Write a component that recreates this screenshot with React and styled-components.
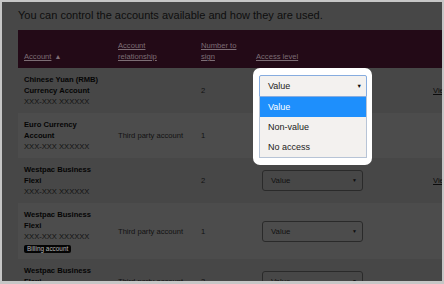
import React from 'react';
import styled, { createGlobalStyle } from 'styled-components';

const GlobalStyle = createGlobalStyle`
  html, body {
    margin: 0;
    padding: 0;
    background: #c6c6c6;
  }
  body {
    font-family: "Liberation Sans", Arial, sans-serif;
  }
`;

const Frame = styled.div`
  position: relative;
  width: 444px;
  height: 284px;
  box-sizing: border-box;
  border: 2px solid #c6c6c6;
  border-bottom-width: 3px;
  background: #474747;
  overflow: hidden;
`;

const Page = styled.div`
  width: 480px;
  padding: 6px 0 0 16px;
`;

const Title = styled.h1`
  margin: 0 0 8px;
  font-size: 11px;
  line-height: 14px;
  font-weight: normal;
  color: #0e0e0e;
`;

const Table = styled.table`
  border-collapse: collapse;
  table-layout: fixed;
  width: 469px;
  font-size: 7.6px;
  line-height: 11px;
`;

const Col = styled.col`
  width: ${({ $w }) => $w}px;
`;

const HeadRow = styled.tr`
  height: 38px;
  background: #230a17;
`;

const Th = styled.th`
  padding: 0 6px 6px;
  text-align: left;
  vertical-align: bottom;
  font-weight: normal;
  color: #7d6d75;
`;

const SortLink = styled.span`
  text-decoration: underline;
`;

const SortArrow = styled.span`
  margin-left: 3px;
  font-size: 7px;
  vertical-align: 0;
`;

const Row = styled.tr`
  background: ${({ $even }) => ($even ? '#4c4c4c' : '#474747')};
`;

const Td = styled.td`
  padding: 6px;
  vertical-align: middle;
  color: #121212;
`;

const Name = styled.div`
  font-weight: bold;
  color: #050505;
`;

const AccountNo = styled.div`
  color: #121212;
`;

const Badge = styled.div`
  width: fit-content;
  height: 8px;
  margin-top: 3px;
  padding: 0 3px;
  border-radius: 2px;
  background: #050505;
  color: #b4b4b4;
  font-size: 6.4px;
  line-height: 8px;
`;

const Select = styled.div`
  display: flex;
  align-items: center;
  justify-content: space-between;
  width: 101px;
  height: 21px;
  box-sizing: border-box;
  margin-left: 6px;
  padding: 0 5px 0 8px;
  border: 1px solid #2a2a2a;
  border-radius: 3px;
  color: #111;
  font-size: 7.8px;
`;

const Caret = styled.span`
  font-size: ${({ $size }) => $size}px;
  color: #0c0c0c;
`;

const ViewLink = styled.span`
  color: #0c0c0c;
  text-decoration: underline;
  white-space: nowrap;
`;

const Popup = styled.div`
  position: absolute;
  left: 251px;
  top: 66px;
  width: 119px;
  box-sizing: border-box;
  padding: 7px 5px 7px 6px;
  background: #fff;
  border-radius: 7px;
  font-size: 9px;
`;

const PopSelect = styled.div`
  display: flex;
  align-items: center;
  justify-content: space-between;
  height: 22px;
  box-sizing: border-box;
  padding: 0 4px 0 8px;
  border: 1px solid #86acdf;
  border-radius: 2px 2px 0 0;
  background: #f3f1ef;
  color: #222;
`;

const PopList = styled.ul`
  margin: 0;
  padding: 0;
  list-style: none;
  border: 1px solid #b7c4d6;
  border-top: none;
  background: #f3f1ef;
`;

const Option = styled.li`
  height: 20px;
  padding-left: 8px;
  line-height: 20px;
  background: ${({ $active }) => ($active ? '#1e8ffc' : 'transparent')};
  color: ${({ $active }) => ($active ? '#fff' : '#222')};
`;

const accounts = [
	{ name: ['Chinese Yuan (RMB)', 'Currency Account'], rel: '', sign: '2', view: true },
	{ name: ['Euro Currency', 'Account'], rel: 'Third party account', sign: '1' },
	{ name: ['Westpac Business', 'Flexi'], rel: '', sign: '2', view: true },
	{ name: ['Westpac Business', 'Flexi'], rel: 'Third party account', sign: '1', billing: true },
	{ name: ['Westpac Business', 'Flexi'], rel: 'Third party account', sign: '3' },
];

function App() {
	return (
		<>
			<GlobalStyle />
			<Frame>
				<Page>
					<Title>You can control the accounts available and how they are used.</Title>
					<Table>
						<colgroup>
							<Col $w={94} />
							<Col $w={83} />
							<Col $w={55} />
							<Col $w={177} />
							<Col $w={60} />
						</colgroup>
						<thead>
							<HeadRow>
								<Th><SortLink>Account</SortLink><SortArrow>▲</SortArrow></Th>
								<Th><SortLink>Account<br />relationship</SortLink></Th>
								<Th><SortLink>Number to<br />sign</SortLink></Th>
								<Th><SortLink>Access level</SortLink></Th>
								<Th />
							</HeadRow>
						</thead>
						<tbody>
							{accounts.map((acc, index) => (
								<Row key={index} $even={index % 2 === 1}>
									<Td>
										{acc.name.map((line) => <Name key={line}>{line}</Name>)}
										<AccountNo>XXX-XXX XXXXXX</AccountNo>
										{acc.billing && <Badge>Billing account</Badge>}
									</Td>
									<Td>{acc.rel}</Td>
									<Td>{acc.sign}</Td>
									<Td>
										<Select>
											<span>Value</span>
											<Caret $size={5}>▼</Caret>
										</Select>
									</Td>
									<Td>{acc.view && <ViewLink>View details</ViewLink>}</Td>
								</Row>
							))}
						</tbody>
					</Table>
				</Page>
				<Popup>
					<PopSelect>
						<span>Value</span>
						<Caret $size={5.5}>▼</Caret>
					</PopSelect>
					<PopList>
						<Option $active>Value</Option>
						<Option>Non-value</Option>
						<Option>No access</Option>
					</PopList>
				</Popup>
			</Frame>
		</>
	);
}

export default App;
